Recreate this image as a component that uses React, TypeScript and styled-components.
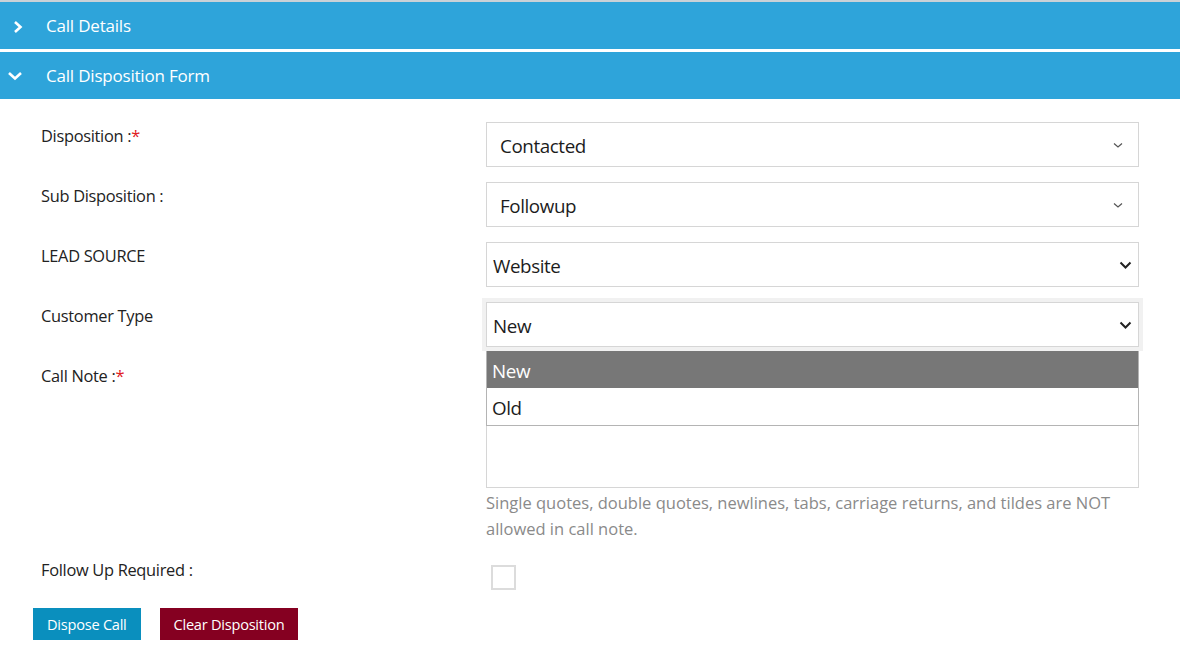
import React from "react";
import styled, { createGlobalStyle } from "styled-components";

const GlobalStyle = createGlobalStyle`
  html, body { margin: 0; padding: 0; background: #ffffff; }
  body { font-family: "Open Sans", "Noto Sans", "Liberation Sans", sans-serif; color: #222; }
  * { box-sizing: border-box; }
`;

const Page = styled.div`
  width: 1180px;
  height: 670px;
  background: #fff;
  border-top: 2px solid #c9d1d7;
  overflow: hidden;
`;

const AccordionHeader = styled.div<{ $open?: boolean }>`
  height: 47px;
  background: #2ea4da;
  display: flex;
  align-items: center;
  color: #fff;
  font-size: 17px;
  letter-spacing: -0.2px;
  margin-bottom: ${(p) => (p.$open ? "0" : "3px")};
`;

const HeaderIcon = styled.span<{ $open?: boolean }>`
  width: 46px;
  display: flex;
  padding-left: ${(p) => (p.$open ? "7px" : "12px")};
  padding-top: ${(p) => (p.$open ? "0" : "2px")};
`;

const Form = styled.div`
  padding: 23px 41px 0 41px;
`;

const Row = styled.div<{ $gap?: number }>`
  display: grid;
  grid-template-columns: 445px 653px;
  margin-bottom: ${(p) => p.$gap ?? 15}px;
`;

const Label = styled.div`
  font-size: 16.4px;
  letter-spacing: -0.3px;
  color: #222;
  padding-top: 2px;
`;

const Req = styled.span`
  color: #e0201e;
`;

const SelectBox = styled.div<{ $native?: boolean; $focus?: boolean }>`
  height: 45px;
  border: 1px solid #d6d6d6;
  display: flex;
  align-items: center;
  justify-content: space-between;
  padding: 2px ${(p) => (p.$native ? "6px" : "15px")} 0 ${(p) => (p.$native ? "6px" : "13px")};
  font-size: 18.8px;
  letter-spacing: -0.4px;
  color: #1c1c1c;
  background: #fff;
  box-shadow: ${(p) => (p.$focus ? "0 0 0 4px #f1f1f1" : "none")};
`;

const Control = styled.div`
  position: relative;
`;

const TextArea = styled.div`
  height: 126px;
  border: 1px solid #d6d6d6;
  background: #fff;
`;

const Help = styled.div`
  font-size: 16.5px;
  line-height: 26px;
  color: #8a8a8a;
  padding: 2px 20px 0 0;
`;

const CheckBox = styled.div`
  width: 25px;
  height: 25px;
  border: 2px solid #dcdcdc;
  margin: 9px 0 0 5px;
  background: #fff;
`;

const Dropdown = styled.div`
  position: absolute;
  top: 49px;
  left: 0;
  width: 653px;
  border: 1px solid #b4b4b4;
  border-top: none;
  background: #fff;
  z-index: 2;
`;

const Option = styled.div<{ $active?: boolean }>`
  height: 37px;
  display: flex;
  align-items: center;
  padding: 3px 0 0 5px;
  font-size: 18.8px;
  letter-spacing: -0.4px;
  background: ${(p) => (p.$active ? "#777777" : "#fff")};
  color: ${(p) => (p.$active ? "#fff" : "#1c1c1c")};
`;

const Buttons = styled.div`
  display: flex;
  gap: 19px;
  margin-left: -8px;
`;

const Button = styled.button<{ $variant: "primary" | "danger" }>`
  height: 32px;
  border: none;
  padding: 0 14px;
  font-family: inherit;
  font-size: 14.6px;
  letter-spacing: -0.25px;
  color: #fff;
  background: ${(p) => (p.$variant === "primary" ? "#0a8fbe" : "#850021")};
  cursor: pointer;
`;

const ChevronRight = () => (
  <svg width="12" height="14" viewBox="0 0 12 14">
    <path d="M3 2 L8.5 7 L3 12" fill="none" stroke="#fff" strokeWidth="2.6" />
  </svg>
);

const ChevronDown = () => (
  <svg width="16" height="12" viewBox="0 0 16 12">
    <path d="M2 3 L8 8.5 L14 3" fill="none" stroke="#fff" strokeWidth="2.6" />
  </svg>
);

const ThinChevron = () => (
  <svg width="10" height="7" viewBox="0 0 10 7">
    <path d="M1 1.5 L5 5 L9 1.5" fill="none" stroke="#555" strokeWidth="1.2" />
  </svg>
);

const BoldChevron = () => (
  <svg width="13" height="9" viewBox="0 0 13 9">
    <path d="M1.5 1.5 L6.5 6.5 L11.5 1.5" fill="none" stroke="#222" strokeWidth="2" />
  </svg>
);

export default function App() {
  return (
    <>
      <GlobalStyle />
      <Page>
        <AccordionHeader>
          <HeaderIcon>
            <ChevronRight />
          </HeaderIcon>
          Call Details
        </AccordionHeader>
        <AccordionHeader $open>
          <HeaderIcon $open>
            <ChevronDown />
          </HeaderIcon>
          Call Disposition Form
        </AccordionHeader>
        <Form>
          <Row>
            <Label>
              Disposition :<Req>*</Req>
            </Label>
            <SelectBox>
              Contacted
              <ThinChevron />
            </SelectBox>
          </Row>
          <Row>
            <Label>Sub Disposition :</Label>
            <SelectBox>
              Followup
              <ThinChevron />
            </SelectBox>
          </Row>
          <Row>
            <Label>LEAD SOURCE</Label>
            <SelectBox $native>
              Website
              <BoldChevron />
            </SelectBox>
          </Row>
          <Row>
            <Label>Customer Type</Label>
            <Control>
              <SelectBox $native $focus>
                New
                <BoldChevron />
              </SelectBox>
              <Dropdown>
                <Option $active>New</Option>
                <Option>Old</Option>
              </Dropdown>
            </Control>
          </Row>
          <Row $gap={14}>
            <Label>
              Call Note :<Req>*</Req>
            </Label>
            <div>
              <TextArea />
              <Help>
                Single quotes, double quotes, newlines, tabs, carriage returns, and tildes are NOT allowed in call note.
              </Help>
            </div>
          </Row>
          <Row $gap={18}>
            <Label>Follow Up Required :</Label>
            <div>
              <CheckBox />
            </div>
          </Row>
          <Buttons>
            <Button $variant="primary">Dispose Call</Button>
            <Button $variant="danger">Clear Disposition</Button>
          </Buttons>
        </Form>
      </Page>
    </>
  );
}
